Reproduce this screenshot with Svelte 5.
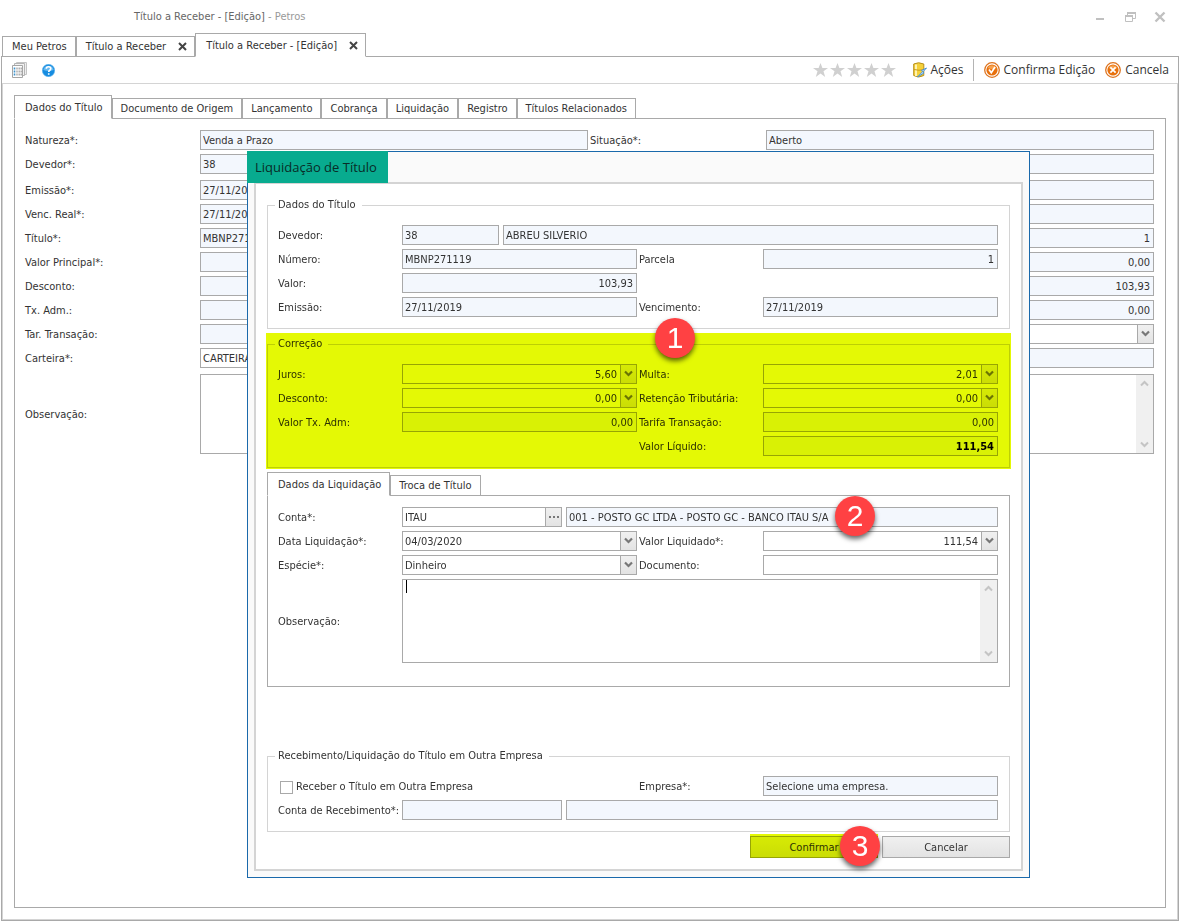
<script>
    let windowTabs = [
        { text: "Meu Petros", closable: false },
        { text: "Título a Receber", closable: true },
        { text: "Título a Receber - [Edição]", closable: true },
    ];
    let activeWindow = 2;

    let formTabs = [
        "Dados do Título",
        "Documento de Origem",
        "Lançamento",
        "Cobrança",
        "Liquidação",
        "Registro",
        "Títulos Relacionados",
    ];
    let activeForm = 0;

    let payTabs = ["Dados da Liquidação", "Troca de Título"];
    let activePay = 0;

    // rows of the title form, right is the field of the second column
    let rows = [
        { id: "emissao", label: "Emissão*:", left: "27/11/2019", right: "" },
        { id: "venc", label: "Venc. Real*:", left: "27/11/2019", right: "" },
        { id: "titulo", label: "Título*:", left: "MBNP271119", right: "1" },
        { id: "principal", label: "Valor Principal*:", left: "", right: "0,00" },
        { id: "desconto", label: "Desconto:", left: "", right: "103,93" },
        { id: "txadm", label: "Tx. Adm.:", left: "", right: "0,00" },
    ];

    let corrections = [
        { id: "juros", label: "Juros:", value: "5,60", drop: true },
        { id: "multa", label: "Multa:", value: "2,01", drop: true },
        { id: "c-desconto", label: "Desconto:", value: "0,00", drop: true },
        { id: "retencao", label: "Retenção Tributária:", value: "0,00", drop: true },
        { id: "c-txadm", label: "Valor Tx. Adm:", value: "0,00", drop: false },
        { id: "tarifa", label: "Tarifa Transação:", value: "0,00", drop: false },
    ];
</script>

{#snippet chevron()}
    <svg width="9" height="8" viewBox="0 0 9 8"><path d="M1 1.500l3.500 3.500L8 1.500" fill="none" stroke="#777" stroke-width="2.200" /></svg>
{/snippet}

{#snippet combo(id, value, number)}
    <div class="combo">
        <input {id} {value} class:number />
        <button aria-labelledby={id + "-label"}>{@render chevron()}</button>
    </div>
{/snippet}

{#snippet scrollbar()}
    <div class="scrollbar">
        <svg width="9" height="7" viewBox="0 0 9 7"><path d="M1 5.500l3.500-3.500L8 5.500" fill="none" stroke="#c4c4c4" stroke-width="2" /></svg>
        <svg width="9" height="7" viewBox="0 0 9 7"><path d="M1 1.500L4.500 5 8 1.500" fill="none" stroke="#c4c4c4" stroke-width="2" /></svg>
    </div>
{/snippet}

{#snippet ring(mark)}
    <svg width="16" height="16" viewBox="0 0 16 16">
        <circle cx="8" cy="8" r="7.300" fill="#fff" stroke="#dd7420" stroke-width="1.300" />
        <circle cx="8" cy="8" r="5.600" fill="#e8700c" />
        <path d="M3.500 6a5 5 0 0 1 9 0q-4 2.200-9 0z" fill="#f7a14e" />
        <path d={mark} fill="none" stroke="#fff" stroke-width="1.700" />
    </svg>
{/snippet}

<div class="window">
    <header class="titlebar">
        <h1>Título a Receber - [Edição] <span>- Petros</span></h1>
        <div class="controls">
            <button aria-label="Minimizar"><svg width="12" height="12" viewBox="0 0 12 12"><path d="M2 8h8" stroke="#c0c0c0" stroke-width="2" /></svg></button>
            <button aria-label="Restaurar"><svg width="12" height="12" viewBox="0 0 12 12"><path d="M3.500 4V1.500h8v6H9M1.500 4.500h7v6h-7z" fill="none" stroke="#c0c0c0" /><path d="M3 2h9M1 5h8" stroke="#c0c0c0" stroke-width="2" /></svg></button>
            <button aria-label="Fechar"><svg width="12" height="12" viewBox="0 0 12 12"><path d="M1.500 1.500l9 9M10.500 1.500l-9 9" stroke="#c0c0c0" stroke-width="2.400" /></svg></button>
        </div>
    </header>

    <nav class="tabs window-tabs">
        {#each windowTabs as tab, i}
            <div class="tab" class:active={i === activeWindow} class:closable={tab.closable}>
                <button on:click={() => (activeWindow = i)}>{tab.text}</button>
                {#if tab.closable}
                    <button class="close" aria-label="Fechar"><svg width="9" height="9" viewBox="0 0 9 9"><path d="M1 1l7 7M8 1L1 8" stroke="#444" stroke-width="2" /></svg></button>
                {/if}
            </div>
        {/each}
    </nav>

    <div class="frame">
        <div class="toolbar">
            <button class="tool" aria-label="Grade">
                <svg width="17" height="16" viewBox="0 0 17 16">
                    <path d="M5.500 .5h10v12h-10z" fill="#eee" stroke="#c4c4c4" />
                    <path d="M3.500 1.500h10v12h-10z" fill="#f2f2f2" stroke="#b4b4b4" />
                    <path d="M1.500 3.500h10v12h-10z" fill="#fff" stroke="#a5a5a5" />
                    <path d="M3.500 5.500v9" stroke="#3f93cc" stroke-width="1.600" stroke-dasharray="2 1" />
                    <path d="M6 5.500v9M8.200 5.500v9M10.200 5.500v9" stroke="#a8a8a8" stroke-width="1.400" stroke-dasharray="2 1" />
                </svg>
            </button>
            <button class="tool help" aria-label="Ajuda">
                <svg width="13" height="13" viewBox="0 0 13 13">
                    <circle cx="6.500" cy="6.500" r="6.200" fill="#168ce0" stroke="#5fb5ee" stroke-width=".6" />
                    <path d="M1.300 6a5.300 5.300 0 0 1 10.400 0q-5 2-10.400 0z" fill="#65b8f0" />
                    <path d="M4.300 4.800c0-2.700 4.500-2.700 4.500 0 0 1.500-2.100 1.400-2.100 3.100M6.700 9.200v1.500" fill="none" stroke="#fff" stroke-width="1.600" />
                </svg>
            </button>
            <div class="stars">
                {#each [1, 2, 3, 4, 5] as star (star)}
                    <svg width="15" height="14" viewBox="0 0 15 14"><path d="M7.500 0l1.900 5H15l-4.500 3.300L12.200 14 7.500 10.600 2.800 14l1.700-5.700L0 5h5.600z" fill="#d0d0d0" /></svg>
                {/each}
            </div>
            <button class="tool text">
                <svg width="14" height="16" viewBox="0 0 14 16">
                    <path d="M.7 2Q5.500-.5 10.800 2v11.500q-5 3-10.100 0z" fill="#f5d13a" stroke="#b9901c" />
                    <path d="M3 2.500v11.500" stroke="#fff3b0" stroke-width="2" />
                    <path d="M1 7.500q5 1.500 10 0" fill="none" stroke="#c79c20" />
                    <path d="M13.500 6L8.500 8.500l1.200 1L4.500 15l6.500-4-1.300-1z" fill="#d8f0ff" stroke="#4a91d3" />
                </svg>
                Ações
            </button>
            <div class="divider"></div>
            <button class="tool text">{@render ring("M5 7.500l2.300 3.200L11 5")} Confirma Edição</button>
            <button class="tool text last">{@render ring("M5.400 5.400l5.200 5.200M10.600 5.400l-5.200 5.200")} Cancela</button>
        </div>

        <main>
            <nav class="tabs">
                {#each formTabs as tab, i}
                    <div class="tab" class:active={i === activeForm}>
                        <button on:click={() => (activeForm = i)}>{tab}</button>
                    </div>
                {/each}
            </nav>
            <section class="panel">
                <div class="form">
                    <label for="natureza">Natureza*:</label>
                    <input id="natureza" value="Venda a Prazo" readonly />
                    <label for="situacao" class="second">Situação*:</label>
                    <input id="situacao" value="Aberto" readonly />
                    <label for="devedor" id="devedor-label">Devedor*:</label>
                    <div class="pair wide">
                        <input id="devedor" value="38" readonly />
                        <input aria-labelledby="devedor-label" readonly />
                    </div>
                </div>
                <div class="form">
                    {#each rows as row}
                        <label for={row.id} id={row.id + "-label"}>{row.label}</label>
                        <input id={row.id} value={row.left} readonly />
                        <input class="number last-col" aria-labelledby={row.id + "-label"} value={row.right} readonly />
                    {/each}
                    <label for="tar" id="tar-label">Tar. Transação:</label>
                    <input id="tar" readonly />
                    <div class="combo last-col">
                        <select aria-labelledby="tar-label"><option></option></select>
                        <span class="arrow">{@render chevron()}</span>
                    </div>
                    <label for="carteira" id="carteira-label">Carteira*:</label>
                    <input id="carteira" value="CARTEIRA" />
                    <input class="last-col" aria-labelledby="carteira-label" readonly />
                </div>
                <div class="form">
                    <label for="obs">Observação:</label>
                    <div class="memo wide">
                        <textarea id="obs"></textarea>
                        {@render scrollbar()}
                    </div>
                </div>
            </section>
        </main>
    </div>
</div>

<div class="dialog" role="dialog" aria-labelledby="dialog-title">
    <h2 id="dialog-title" class="mark-title">Liquidação de Título</h2>
    <div class="dialog-body">
        <fieldset>
            <legend>Dados do Título</legend>
            <div class="form">
                <label for="d-devedor" id="d-devedor-label">Devedor:</label>
                <div class="pair short wide">
                    <input id="d-devedor" value="38" readonly />
                    <input aria-labelledby="d-devedor-label" value="ABREU SILVERIO" readonly />
                </div>
                <label for="numero">Número:</label>
                <input id="numero" value="MBNP271119" readonly />
                <label for="parcela" class="second">Parcela</label>
                <input id="parcela" class="number" value="1" readonly />
                <label for="valor">Valor:</label>
                <input id="valor" class="number" value="103,93" readonly />
                <label for="d-emissao">Emissão:</label>
                <input id="d-emissao" value="27/11/2019" readonly />
                <label for="vencimento" class="second">Vencimento:</label>
                <input id="vencimento" value="27/11/2019" readonly />
            </div>
        </fieldset>

        <fieldset class="marked correction">
            <legend>Correção</legend>
            <div class="form">
                {#each corrections as item, i}
                    <label for={item.id} id={item.id + "-label"} class:second={i % 2 === 1}>{item.label}</label>
                    {#if item.drop}
                        {@render combo(item.id, item.value, true)}
                    {:else}
                        <input id={item.id} class="number" value={item.value} readonly />
                    {/if}
                {/each}
                <label for="liquido" class="second">Valor Líquido:</label>
                <input id="liquido" class="number total" value="111,54" readonly />
            </div>
            <span class="badge one">1</span>
        </fieldset>

        <div class="payment">
            <nav class="tabs">
                {#each payTabs as tab, i}
                    <div class="tab" class:active={i === activePay}>
                        <button on:click={() => (activePay = i)}>{tab}</button>
                    </div>
                {/each}
            </nav>
            <section class="panel">
                <div class="form">
                    <label for="conta" id="conta-label">Conta*:</label>
                    <div class="pair wide">
                        <div class="combo">
                            <input id="conta" value="ITAU" />
                            <button aria-labelledby="conta-label"><svg width="10" height="2" viewBox="0 0 10 2"><path d="M0 1h10" stroke="#777" stroke-width="2" stroke-dasharray="2 2" /></svg></button>
                        </div>
                        <input aria-labelledby="conta-label" value="001 - POSTO GC LTDA - POSTO GC - BANCO ITAU S/A" readonly />
                        <span class="badge two">2</span>
                    </div>
                    <label for="data" id="data-label">Data Liquidação*:</label>
                    {@render combo("data", "04/03/2020", false)}
                    <label for="liquidado" id="liquidado-label" class="second">Valor Liquidado*:</label>
                    {@render combo("liquidado", "111,54", true)}
                    <label for="especie">Espécie*:</label>
                    <div class="combo">
                        <select id="especie"><option>Dinheiro</option></select>
                        <span class="arrow">{@render chevron()}</span>
                    </div>
                    <label for="documento" class="second">Documento:</label>
                    <input id="documento" />
                    <label for="d-obs">Observação:</label>
                    <div class="memo wide">
                        <textarea id="d-obs"></textarea>
                        <span class="caret"></span>
                        {@render scrollbar()}
                    </div>
                </div>
            </section>
        </div>

        <fieldset class="company">
            <legend>Recebimento/Liquidação do Título em Outra Empresa</legend>
            <div class="form">
                <label class="check"><input type="checkbox" />Receber o Título em Outra Empresa</label>
                <label for="empresa" class="second">Empresa*:</label>
                <input id="empresa" value="Selecione uma empresa." readonly />
                <label for="recebimento" id="recebimento-label">Conta de Recebimento*:</label>
                <div class="pair wide">
                    <input id="recebimento" readonly />
                    <input aria-labelledby="recebimento-label" readonly />
                </div>
            </div>
        </fieldset>

        <div class="actions">
            <div class="marked confirm">
                <button>Confirmar</button>
                <span class="badge three">3</span>
            </div>
            <button>Cancelar</button>
        </div>
    </div>
</div>

<style>
    :global(body) {
        margin: 0;
        background: #fff;
    }
    .window,
    .dialog {
        font-family: "DejaVu Sans Condensed", "DejaVu Sans", sans-serif;
        font-size: 11px;
        line-height: 14px;
        color: #333;
    }
    .window {
        display: flex;
        flex-direction: column;
        min-height: 100vh;
        box-sizing: border-box;
        padding: 0 1px 1px;
    }
    button,
    input,
    select,
    textarea {
        font: inherit;
        color: inherit;
        box-sizing: border-box;
        min-width: 0;
        margin: 0;
        border-radius: 0;
        outline: none;
    }
    button {
        padding: 0;
        border: none;
        background: none;
    }
    svg {
        display: block;
        flex: none;
    }

    .titlebar {
        display: flex;
        align-items: center;
        justify-content: space-between;
        height: 33px;
        padding: 0 13px 0 133px;
    }
    h1 {
        margin: 0;
        font-size: 11px;
        font-weight: normal;
        color: #666;
    }
    h1 span {
        color: #999;
    }
    .controls {
        display: flex;
        gap: 18px;
    }

    .tabs {
        display: flex;
        align-items: flex-end;
        position: relative;
        z-index: 1;
        margin-bottom: -1px;
    }
    .window-tabs {
        padding-left: 1px;
    }
    .tab {
        display: flex;
        align-items: center;
        height: 21px;
        box-sizing: border-box;
        padding: 0 8px;
        border: 1px solid #a9a9a9;
        background: #fff;
        white-space: nowrap;
    }
    .window-tabs .tab {
        padding-left: 9px;
    }
    .tab.closable {
        gap: 12px;
        padding-right: 7px;
    }
    .tab.active {
        height: 24px;
        padding-top: 1px;
        padding-left: 10px;
        border-bottom-color: #fff;
    }

    .frame {
        flex: 1;
        display: flex;
        flex-direction: column;
        border: 1px solid #a9a9a9;
    }
    .toolbar {
        display: flex;
        align-items: center;
        height: 26px;
        padding: 0 9px;
    }
    .tool {
        display: flex;
        align-items: center;
        gap: 4px;
    }
    .tool.text,
    h2 {
        font-family: "Open Sans", "Noto Sans", sans-serif;
    }
    .tool.text {
        font-size: 12px;
        white-space: nowrap;
    }
    .help {
        margin-left: 14px;
    }
    .stars {
        display: flex;
        gap: 2px;
        margin: 0 17px 0 auto;
    }
    .divider {
        width: 1px;
        height: 22px;
        margin: 0 10px 0 9px;
        background: #b4b4b4;
    }
    .last {
        margin-left: 10px;
    }
    main {
        flex: 1;
        display: flex;
        flex-direction: column;
        padding: 11px;
        border: 1px solid #d4d4d4;
    }
    main > .panel {
        flex: 1;
        padding: 11px 11px 11px 10px;
    }
    .panel {
        border: 1px solid #a9a9a9;
    }
    main .form {
        grid-template-columns: 175px 1fr 178px 1fr;
        margin-bottom: 6px;
    }

    .form {
        display: grid;
        grid-template-columns: 124px 1fr 126px 1fr;
        row-gap: 4px;
        align-items: center;
    }
    label {
        grid-column: 1;
        padding-top: 2px;
        white-space: nowrap;
    }
    label.second {
        grid-column: 3;
        padding-left: 2px;
    }
    label.check {
        grid-column: 1 / 3;
        display: flex;
        align-items: center;
        gap: 3px;
        padding-left: 2px;
    }
    .last-col {
        grid-column: 4;
    }
    .wide {
        grid-column: 2 / 5;
    }
    input,
    select {
        width: 100%;
        height: 20px;
        padding: 0 3px 0 2px;
        border: 1px solid #a9a9a9;
        background: #fff;
        appearance: none;
    }
    select {
        padding-top: 1px;
    }
    input[readonly] {
        background: #f3f7fd;
    }
    input[type="checkbox"] {
        width: 13px;
        height: 13px;
        padding: 0;
    }
    .number {
        text-align: right;
    }
    .total {
        font-weight: bold;
        color: #000;
    }
    .combo {
        display: flex;
        position: relative;
    }
    .combo button,
    .arrow {
        flex: none;
        display: flex;
        align-items: center;
        justify-content: center;
        width: 17px;
        height: 20px;
        margin-left: -1px;
        box-sizing: border-box;
        border: 1px solid #a9a9a9;
        background: linear-gradient(#f0f0f0, #e3e3e3);
        pointer-events: none;
    }
    .pair {
        position: relative;
        display: grid;
        grid-template-columns: 160px 1fr;
        gap: 4px;
    }
    .pair.short {
        grid-template-columns: 97px 1fr;
    }
    .memo {
        position: relative;
        display: flex;
        height: 84px;
        box-sizing: border-box;
        border: 1px solid #a9a9a9;
        background: #fff;
    }
    main .memo {
        height: 80px;
    }
    textarea {
        flex: 1;
        padding: 1px 3px;
        border: none;
        resize: none;
        overflow: hidden;
        background: none;
    }
    .caret {
        position: absolute;
        top: 0;
        left: 3px;
        width: 1px;
        height: 13px;
        background: #000;
    }
    .scrollbar {
        display: flex;
        flex-direction: column;
        align-items: center;
        justify-content: space-between;
        width: 17px;
        padding: 5px 0;
        box-sizing: border-box;
        background: #f0f0f0;
    }

    .dialog {
        position: absolute;
        z-index: 2;
        top: 151px;
        left: 247px;
        right: 150px;
        box-sizing: border-box;
        padding: 0 6px 6px;
        border: 1px solid #1a69ab;
        background: #fafafa;
    }
    h2 {
        width: max-content;
        margin: 0 0 -1px -7px;
        padding: 7px 11px 7px 8px;
        font-size: 13px;
        line-height: 18px;
        font-weight: normal;
    }
    .mark-title {
        position: relative;
        z-index: 1;
        margin-top: -1px;
        background: #08ab8f;
        color: #092c27;
    }
    .dialog-body {
        display: flex;
        flex-direction: column;
        padding: 14px 11px 11px;
        border: 2px solid #d4d4d4;
        background: #fff;
    }
    fieldset {
        position: relative;
        min-width: 0;
        margin: 0;
        padding: 13px 11px 11px 10px;
        border: 1px solid #d4d4d4;
    }
    legend {
        margin-left: -3px;
        padding: 0 6px 0 3px;
    }
    .payment > .panel {
        padding: 11px 11px 23px 10px;
    }
    .correction {
        margin: 8px 0 4px;
    }
    .company {
        margin: 62px 0 4px;
    }
    .marked {
        position: relative;
    }
    /* highlighter laid over the area */
    .marked::after {
        content: "";
        position: absolute;
        inset: 0;
        background: #e4f905;
        mix-blend-mode: multiply;
        pointer-events: none;
    }
    .correction::after {
        inset: -18px -2px -2px;
    }
    .confirm::after {
        top: -2px;
    }
    .actions {
        display: flex;
        justify-content: flex-end;
        gap: 4px;
    }
    .actions button {
        display: block;
        width: 128px;
        height: 22px;
        padding-top: 1px;
        border: 1px solid #a9a9a9;
        background: linear-gradient(#f0f0f0, #e3e3e3);
    }
    .badge {
        position: absolute;
        z-index: 3;
        width: 40px;
        height: 40px;
        border-radius: 50%;
        background: #ff4143;
        box-shadow: 0 3px 5px rgba(0, 0, 0, 0.6);
        color: #fff;
        font-family: "Liberation Sans", Arial, sans-serif;
        font-size: 30px;
        line-height: 40px;
        text-align: center;
    }
    .one {
        top: -33px;
        left: 387px;
    }
    .two {
        top: -11px;
        left: 433px;
    }
    .three {
        top: -10px;
        right: -2px;
    }
</style>
